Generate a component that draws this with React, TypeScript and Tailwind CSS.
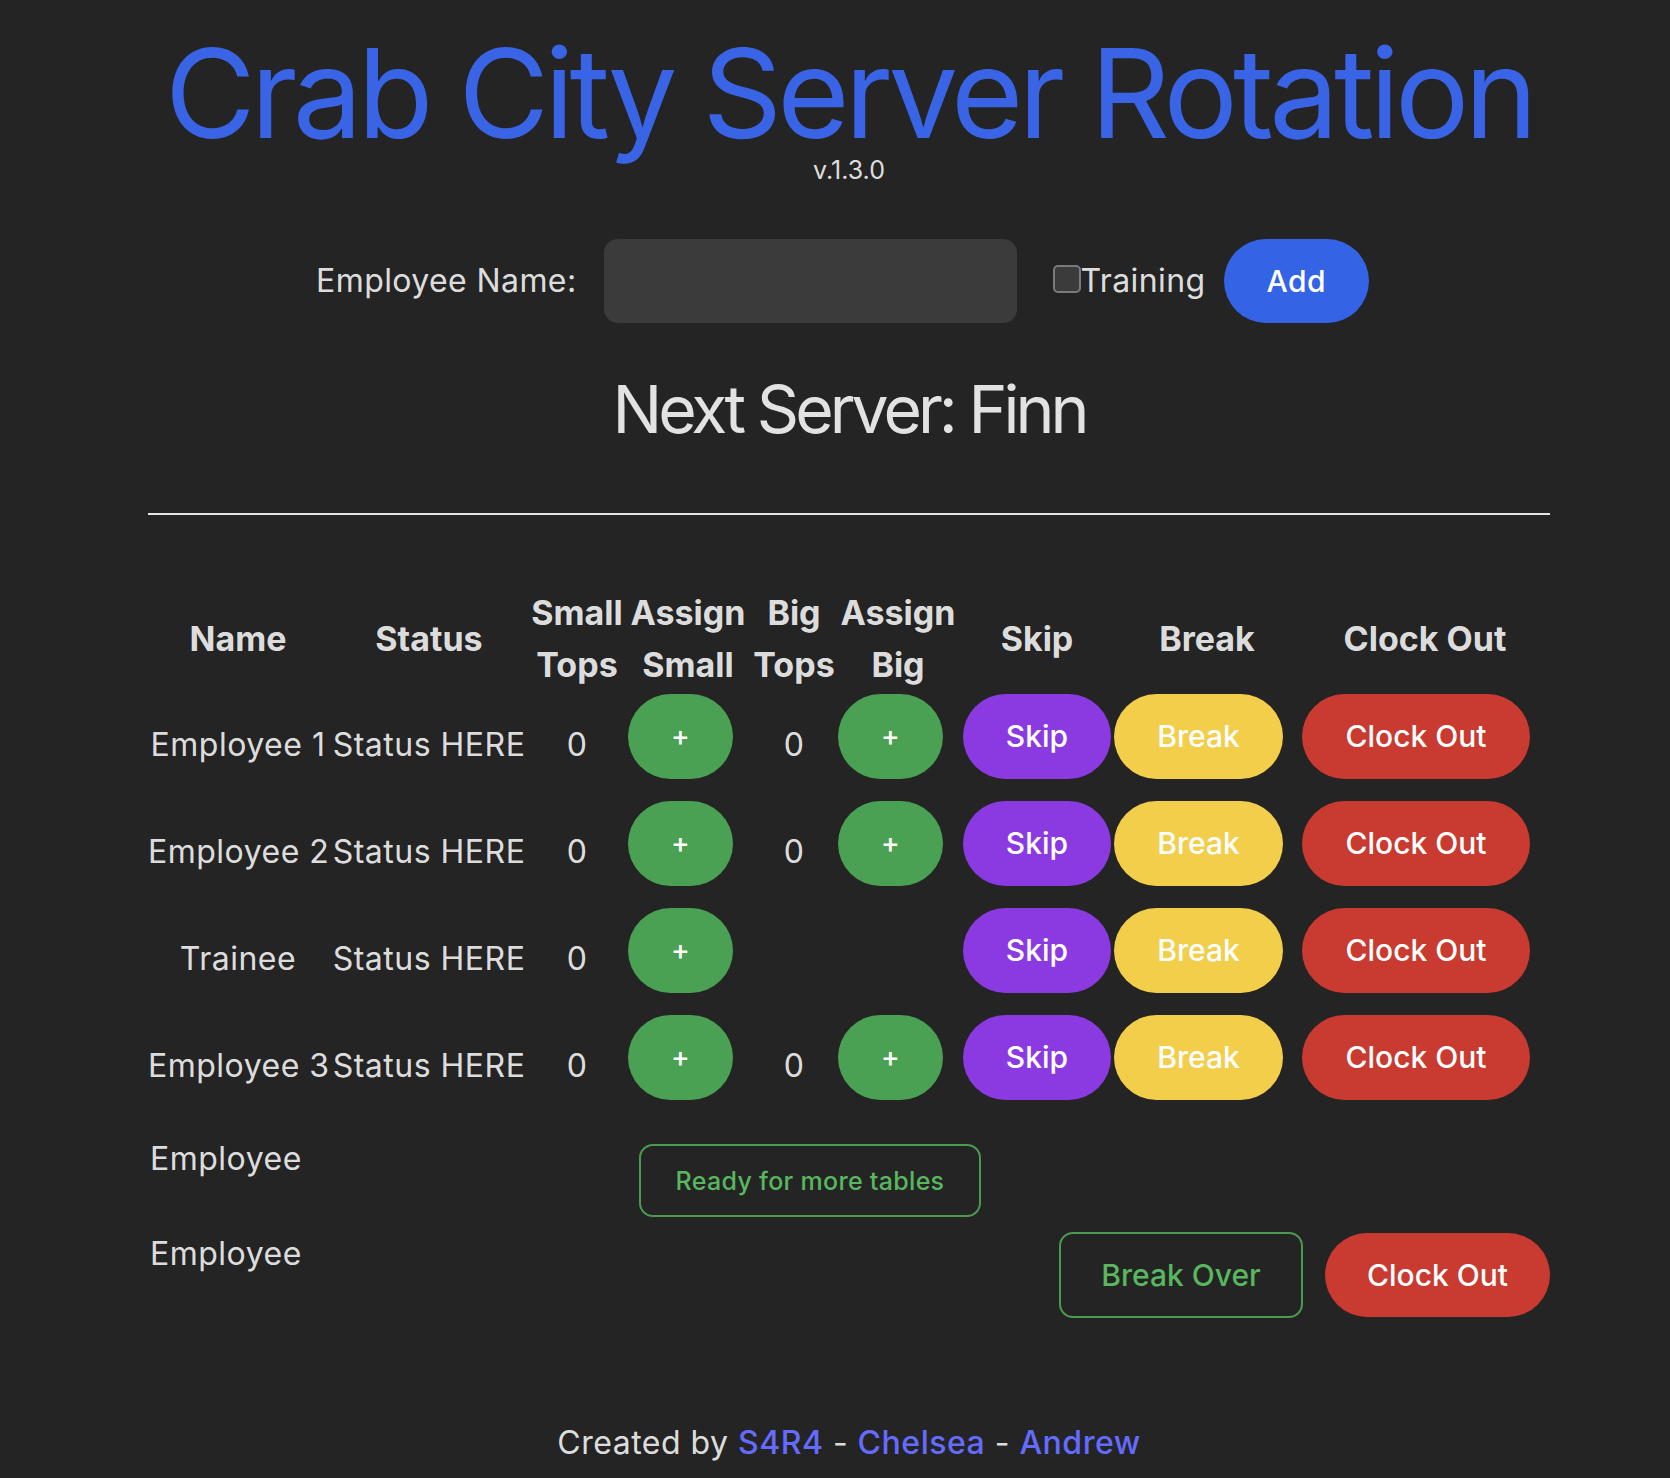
import React from "react";

const rows = [
  { name: "Employee 1", big: true },
  { name: "Employee 2", big: true },
  { name: "Trainee", big: false },
  { name: "Employee 3", big: true },
];

const btn =
  "block h-[85px] px-[43px] rounded-full text-[30px] leading-[36px] font-medium text-white mb-[17px] whitespace-nowrap";
const plusBtn =
  "block h-[85px] w-[105px] rounded-full text-[28px] leading-[36px] font-medium text-white mb-[17px] bg-[#4aa153] mr-[15px]";

export default function App() {
  return (
    <div className="min-h-screen bg-[#242424] font-['Inter',sans-serif] text-[rgba(255,255,255,0.87)] pl-[28px]">
      <div className="w-[1402px] mx-auto flex flex-col items-center">
        <h1 className="mt-[38px] text-[124px] leading-[110px] tracking-[-0.039em] text-[#3a64e6] font-normal whitespace-nowrap">
          Crab City Server Rotation
        </h1>
        <div className="mt-[7px] text-[25px] leading-[30px]">v.1.3.0</div>

        <div className="mt-[54px] h-[84px] flex items-center pr-[13px] tracking-[0.4px]">
          <label className="text-[32px] leading-[48px]">Employee Name:</label>
          <input
            type="text"
            className="ml-[27px] w-[413px] h-[84px] rounded-[14px] bg-[#3b3b3b] outline-none"
          />
          <input
            type="checkbox"
            className="ml-[36px] appearance-none w-[28px] h-[28px] rounded-[5px] border-2 border-[#7a7a7a] bg-[#3b3b3b] -mt-[4px]"
          />
          <span className="text-[32px] leading-[48px]">Training</span>
          <button className="ml-[18px] h-[84px] px-[43px] rounded-full bg-[#3563e6] text-[30px] leading-[36px] font-medium text-white">
            Add
          </button>
        </div>

        <div className="mt-[47px] text-[66px] leading-[79px] tracking-[-0.06em] whitespace-nowrap">
          Next Server: Finn
        </div>

        <div className="mt-[64px] w-full h-[2px] bg-[#e6e6e6]" />

        <table className="mt-[72px] w-full table-fixed border-collapse text-center text-[32px] leading-[48px] tracking-[0.5px]">
          <colgroup>
            <col className="w-[180px]" />
            <col className="w-[202px]" />
            <col className="w-[94px]" />
            <col className="w-[128px]" />
            <col className="w-[84px]" />
            <col className="w-[124px]" />
            <col className="w-[154px]" />
            <col className="w-[186px]" />
            <col className="w-[250px]" />
          </colgroup>
          <thead>
            <tr className="font-bold text-[34px] leading-[52px] tracking-normal">
              <th className="p-0 align-middle whitespace-nowrap">Name</th>
              <th className="p-0 align-middle whitespace-nowrap">Status</th>
              <th className="p-0 align-middle whitespace-nowrap">
                Small
                <br />
                Tops
              </th>
              <th className="p-0 align-middle whitespace-nowrap">
                Assign
                <br />
                Small
              </th>
              <th className="p-0 align-middle whitespace-nowrap">
                Big
                <br />
                Tops
              </th>
              <th className="p-0 align-middle whitespace-nowrap">
                Assign
                <br />
                Big
              </th>
              <th className="p-0 align-middle whitespace-nowrap">Skip</th>
              <th className="p-0 align-middle whitespace-nowrap">Break</th>
              <th className="p-0 align-middle whitespace-nowrap">Clock Out</th>
            </tr>
          </thead>
          <tbody>
            {rows.map((r) => (
              <tr key={r.name}>
                <td className="p-0 h-[107px] align-middle whitespace-nowrap">{r.name}</td>
                <td className="p-0 h-[107px] align-middle whitespace-nowrap">Status HERE</td>
                <td className="p-0 h-[107px] align-middle">0</td>
                <td className="p-0 h-[107px] align-middle">
                  <div className="flex justify-center">
                    <button className={plusBtn}>+</button>
                  </div>
                </td>
                <td className="p-0 h-[107px] align-middle">{r.big ? "0" : ""}</td>
                <td className="p-0 h-[107px] align-middle">
                  {r.big && (
                    <div className="flex justify-center">
                      <button className={plusBtn}>+</button>
                    </div>
                  )}
                </td>
                <td className="p-0 h-[107px] align-middle tracking-normal">
                  <div className="flex justify-center">
                    <button className={btn + " bg-[#8a3ae0]"}>Skip</button>
                  </div>
                </td>
                <td className="p-0 h-[107px] align-middle tracking-normal">
                  <div className="flex justify-center">
                    <button className={btn + " bg-[#f2ce4b] mr-[17px]"}>Break</button>
                  </div>
                </td>
                <td className="p-0 h-[107px] align-middle tracking-normal">
                  <div className="flex justify-center">
                    <button className={btn + " bg-[#c93a31] mr-[18px]"}>Clock Out</button>
                  </div>
                </td>
              </tr>
            ))}
          </tbody>
        </table>

        <div className="mt-[16px] w-full flex items-start pl-[2px]">
          <div className="w-[489px] text-[32px] leading-[48px] tracking-[0.5px]">Employee</div>
          <button className="mt-[9px] w-[342px] h-[73px] rounded-[14px] border-2 border-[#4a9a50] text-[#58b75f] text-[25px] leading-[30px] font-medium tracking-[0.3px]">
            Ready for more tables
          </button>
        </div>

        <div className="mt-[13px] w-full flex items-start justify-between pl-[2px]">
          <div className="text-[32px] leading-[48px] tracking-[0.5px]">Employee</div>
          <div className="flex items-start gap-[22px]">
            <button className="mt-[2px] w-[244px] h-[86px] rounded-[14px] border-2 border-[#4a9a50] text-[#58b75f] text-[30px] leading-[36px] font-medium">
              Break Over
            </button>
            <button className="mt-[3px] h-[84px] w-[225px] rounded-full bg-[#c93a31] text-[30px] leading-[36px] font-medium text-white">
              Clock Out
            </button>
          </div>
        </div>

        <div className="mt-[101px] text-[32px] leading-[48px] tracking-[0.5px] whitespace-nowrap">
          Created by <a className="text-[#646cff] font-medium">S4R4</a> -{" "}
          <a className="text-[#646cff] font-medium">Chelsea</a> -{" "}
          <a className="text-[#646cff] font-medium">Andrew</a>
        </div>
        <div className="h-[11px]" />
      </div>
    </div>
  );
}
